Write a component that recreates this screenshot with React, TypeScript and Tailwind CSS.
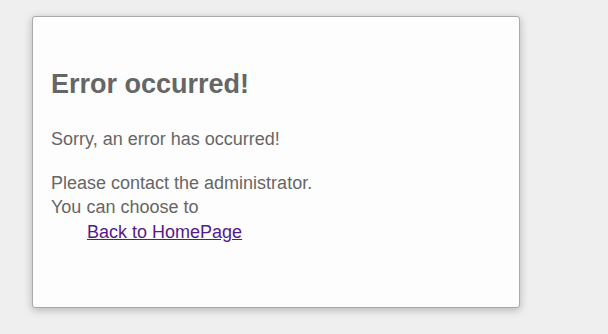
export default function App() {
  return (
    <div
      className="min-h-[334px] w-full bg-[#efefef] pt-[16px] pl-[32px]"
      style={{ fontFamily: '"Liberation Sans", Arial, Helvetica, sans-serif' }}
    >
      <div className="w-[488px] h-[292px] rounded-[3px] border border-[#a9a9a9] bg-[#fdfdfd] px-[18px] pt-[52px] text-[#666666] shadow-[0_2px_8px_rgba(0,0,0,0.25)]">
        <h1 className="text-[27px] font-bold leading-[30px]">Error occurred!</h1>
        <p className="mt-[28px] text-[18px] leading-[24px]">Sorry, an error has occurred!</p>
        <p className="mt-[20px] text-[18px] leading-[24px]">
          Please contact the administrator.
          <br />
          You can choose to
        </p>
        <p className="mt-[1px] pl-[36px] text-[18px] leading-[24px]">
          <a href="#" className="text-[#551a8b] underline">
            Back to HomePage
          </a>
        </p>
      </div>
    </div>
  );
}
